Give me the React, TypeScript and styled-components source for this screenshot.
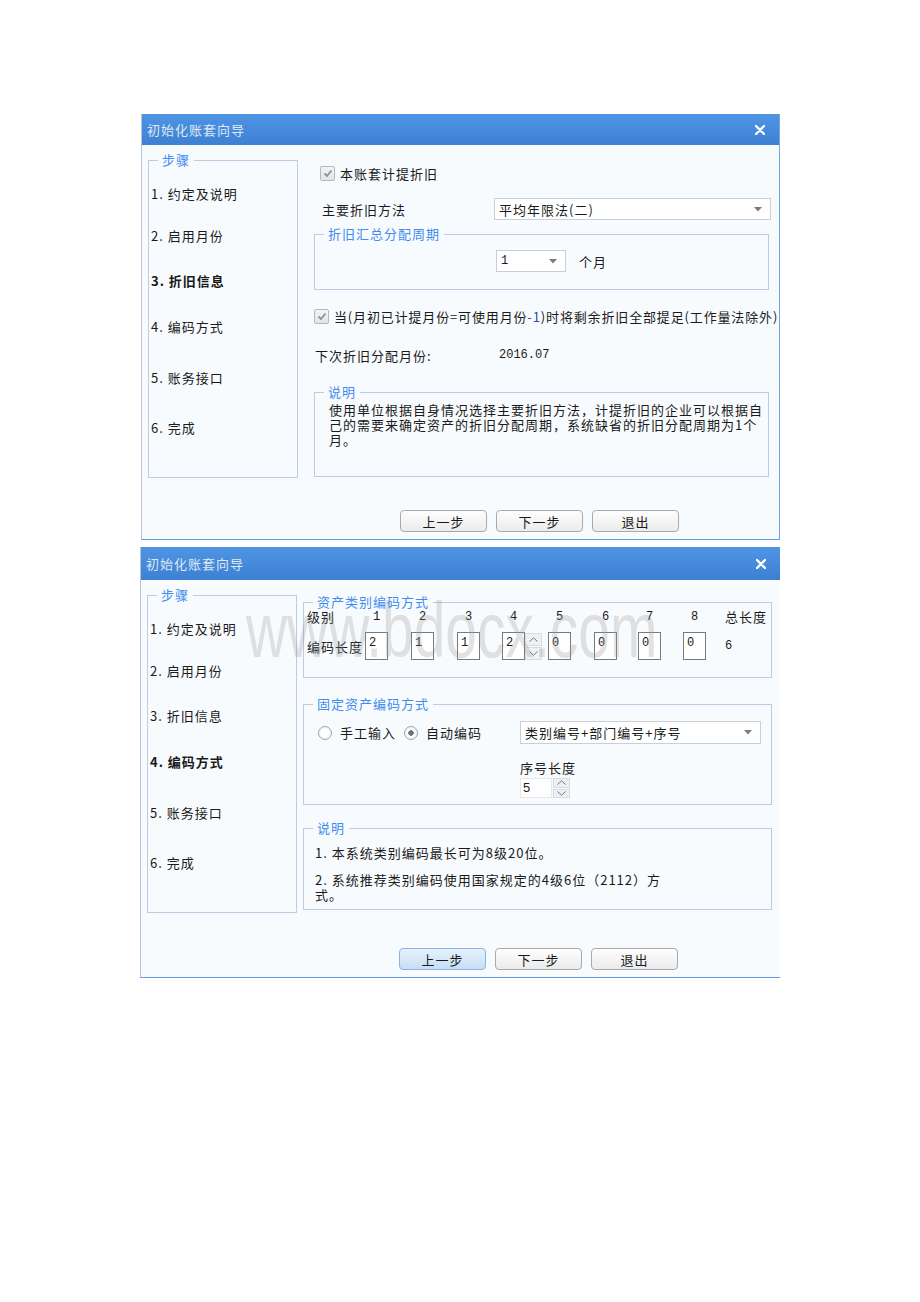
import React from "react";
import styled, { createGlobalStyle } from "styled-components";

const GlobalStyle = createGlobalStyle`
  body {
    margin: 0;
    background: #ffffff;
    font-family: "Noto Sans CJK SC", "Liberation Sans", sans-serif;
    color: #1a1a1a;
  }
`;

const Page = styled.div`
  width: 920px;
  height: 1302px;
  box-sizing: border-box;
  padding: 114px 0 0 140px;
  display: flex;
  flex-direction: column;
  gap: 7px;
`;

const Window = styled.div<{ $h: number; $shift?: number; $edge?: boolean }>`
  position: relative;
  width: ${(p) => 640 - (p.$shift || 0)}px;
  height: ${(p) => p.$h}px;
  margin-left: ${(p) => p.$shift || 0}px;
  box-sizing: border-box;
  display: flex;
  flex-direction: column;
  background: #f8fbfe;
  border-left: 1px solid #b9c3cf;
  border-right: ${(p) => (p.$edge ? "1px solid #6fa6e4" : "none")};
  border-bottom: 1px solid #5e9de2;
  font-size: 13px;
  letter-spacing: 1px;
`;

const TitleBar = styled.div<{ $h: number }>`
  height: ${(p) => p.$h}px;
  flex: none;
  display: flex;
  align-items: center;
  justify-content: space-between;
  padding: 0 14px 0 5px;
  background: linear-gradient(#4f95e4, #3d80d3);
  color: #dfe9f6;
  font-size: 13px;
`;

const CloseIcon = () => (
  <svg width="10" height="10" viewBox="0 0 10 10">
    <path d="M1 1L9 9M9 1L1 9" stroke="#ffffff" strokeWidth="2.4" strokeLinecap="round" />
  </svg>
);

const Body = styled.div<{ $gap: number; $padL: number }>`
  display: grid;
  grid-template-columns: 150px 1fr;
  column-gap: ${(p) => p.$gap}px;
  padding: 7px 0 0 ${(p) => p.$padL}px;
  align-items: start;
`;

const Group = styled.fieldset<{ $w?: number; $h: number; $mt?: number }>`
  margin: ${(p) => p.$mt || 0}px 0 0 0;
  padding: 0;
  min-width: 0;
  width: ${(p) => (p.$w ? `${p.$w}px` : "auto")};
  height: ${(p) => p.$h}px;
  box-sizing: border-box;
  border: 1px solid #bccde2;
  border-radius: 0;
`;

const Legend = styled.legend`
  margin-left: 9px;
  padding: 0 4px;
  color: #3f8bef;
  font-size: 13px;
  line-height: 16px;
`;

const StepItem = styled.div<{ $mt: number; $active?: boolean }>`
  height: 20px;
  line-height: 20px;
  margin-top: ${(p) => p.$mt}px;
  padding-left: 2px;
  font-weight: ${(p) => (p.$active ? 700 : 400)};
  color: #1a1a1a;
  white-space: nowrap;
`;

const steps = ["1. 约定及说明", "2. 启用月份", "3. 折旧信息", "4. 编码方式", "5. 账务接口", "6. 完成"];
const stepGaps = [16, 22, 25, 26, 31, 30];

const Steps = ({ active }: { active: number }) => (
  <Group $h={326}>
    <Legend>步骤</Legend>
    {steps.map((s, i) => (
      <StepItem key={s} $mt={stepGaps[i]} $active={i === active}>
        {s}
      </StepItem>
    ))}
  </Group>
);

const Content = styled.div`
  display: flex;
  flex-direction: column;
  min-width: 0;
`;

const Row = styled.div<{ $mt: number; $h?: number; $indent?: number; $tight?: boolean }>`
  display: flex;
  align-items: center;
  height: ${(p) => p.$h || 20}px;
  margin-top: ${(p) => p.$mt}px;
  padding-left: ${(p) => p.$indent || 0}px;
  white-space: nowrap;
  letter-spacing: ${(p) => (p.$tight ? "0.85px" : "1px")};
`;

const Label = styled.span<{ $w?: number; $ml?: number }>`
  flex: none;
  width: ${(p) => (p.$w ? `${p.$w}px` : "auto")};
  margin-left: ${(p) => p.$ml || 0}px;
`;

const CheckBox = styled.span`
  flex: none;
  width: 13px;
  height: 13px;
  margin-right: 5px;
  border: 1px solid #b3b9c0;
  border-radius: 2px;
  background: linear-gradient(#f2f4f6, #e1e5e9);
  display: flex;
  align-items: center;
  justify-content: center;
`;

const Check = () => (
  <CheckBox>
    <svg width="10" height="9" viewBox="0 0 10 9">
      <path d="M1.5 4.5L4 7L8.5 1.5" fill="none" stroke="#8a9199" strokeWidth="1.8" />
    </svg>
  </CheckBox>
);

const Select = styled.div<{ $w: number; $h: number; $ml?: number }>`
  flex: none;
  width: ${(p) => p.$w}px;
  height: ${(p) => p.$h}px;
  margin-left: ${(p) => p.$ml || 0}px;
  box-sizing: border-box;
  border: 1px solid #c7d0da;
  background: #ffffff;
  display: flex;
  align-items: center;
  justify-content: space-between;
  padding: 0 8px 0 4px;
  font-size: 13px;
`;

const Arrow = () => (
  <svg width="8" height="5" viewBox="0 0 8 5">
    <path d="M0 0H8L4 4.5Z" fill="#7c7c7c" />
  </svg>
);

const Mono = styled.span`
  font-family: "Liberation Mono", "DejaVu Sans Mono", monospace;
  font-size: 12px;
  letter-spacing: 0;
`;

const Hint = styled.span`
  color: #2a49a8;
`;

const Note = styled.div<{ $mt: number; $pl: number; $lh?: number }>`
  margin-top: ${(p) => p.$mt}px;
  padding-left: ${(p) => p.$pl}px;
  line-height: ${(p) => p.$lh || 15}px;
  white-space: nowrap;
`;

const Footer = styled.div`
  margin-top: auto;
  display: flex;
  gap: 9px;
  padding: 0 0 7px 258px;
`;

const Button = styled.button<{ $focus?: boolean }>`
  width: 87px;
  height: 22px;
  padding: 0;
  border: 1px solid ${(p) => (p.$focus ? "#8ab5e2" : "#a9a9a9")};
  border-radius: 4px;
  background: ${(p) =>
    p.$focus ? "linear-gradient(#e6f1fc, #c8def5)" : "linear-gradient(#fefefe, #ebebeb)"};
  font-family: inherit;
  font-size: 13px;
  letter-spacing: 1px;
  color: #1a1a1a;
`;

const Buttons = ({ focus }: { focus?: boolean }) => (
  <Footer>
    <Button $focus={focus}>上一步</Button>
    <Button>下一步</Button>
    <Button>退出</Button>
  </Footer>
);

/* coding table */

const CodeGrid = styled.div`
  display: grid;
  grid-template-columns: 58px 46px 46px 45px 46px 46px 44px 45px 42px auto;
  padding-left: 3px;
  white-space: nowrap;
`;

const HeadCell = styled.div`
  height: 14px;
  line-height: 14px;
`;

const LevelNo = styled(Mono)`
  display: block;
  width: 23px;
  text-align: center;
  line-height: 14px;
`;

const BoxCell = styled.div`
  margin-top: 8px;
  height: 28px;
  display: flex;
  align-items: center;
`;

const CodeBox = styled.div`
  width: 23px;
  height: 28px;
  box-sizing: border-box;
  border: 1px solid #7a7a7a;
  background: #ffffff;
  padding: 1px 0 0 3px;
  line-height: 13px;
`;

const Spin = styled.div<{ $h: number }>`
  width: 17px;
  height: ${(p) => p.$h}px;
  display: flex;
  flex-direction: column;
  gap: 1px;
`;

const SpinHalf = styled.div`
  flex: 1;
  background: #eef1f4;
  border: 1px solid #d6dce2;
  display: flex;
  align-items: center;
  justify-content: center;
`;

const Chevron = ({ up }: { up?: boolean }) => (
  <svg width="9" height="5" viewBox="0 0 9 5">
    <path
      d={up ? "M0.5 4.5L4.5 0.8L8.5 4.5" : "M0.5 0.5L4.5 4.2L8.5 0.5"}
      fill="none"
      stroke="#6f7780"
      strokeWidth="1"
    />
  </svg>
);

const Spinner = ({ h }: { h: number }) => (
  <Spin $h={h}>
    <SpinHalf>
      <Chevron up />
    </SpinHalf>
    <SpinHalf>
      <Chevron />
    </SpinHalf>
  </Spin>
);

const Radio = styled.span<{ $on?: boolean }>`
  flex: none;
  width: 14px;
  height: 14px;
  box-sizing: border-box;
  border-radius: 50%;
  border: 1px solid #a3a9b0;
  background: radial-gradient(circle, ${(p) => (p.$on ? "#6e7378 0 2.5px, " : "")}#ffffff 3px, #e4e7ea);
  margin-right: 8px;
`;

const RadioText = styled.span`
  margin-right: 8px;
`;

const FixedGrid = styled.div`
  display: grid;
  grid-template-columns: 202px 241px;
  padding-left: 14px;
  margin-top: 9px;
`;

const SeqBlock = styled.div`
  grid-column: 2;
  margin-top: 14px;
  display: flex;
  flex-direction: column;
`;

const SeqInputRow = styled.div`
  display: flex;
  gap: 1px;
  margin-top: 1px;
`;

const SeqInput = styled.div`
  width: 32px;
  height: 20px;
  box-sizing: border-box;
  background: #ffffff;
  border: 1px solid #e4e8ec;
  padding-left: 2px;
  line-height: 18px;
  font-family: "Liberation Sans", sans-serif;
`;

const Watermark = styled.div`
  position: absolute;
  left: 105px;
  top: 44px;
  font-family: "Liberation Sans", Arial, sans-serif;
  font-size: 78px;
  line-height: 78px;
  letter-spacing: 0;
  color: rgba(150, 150, 150, 0.28);
  transform: scaleX(0.73);
  transform-origin: left top;
  pointer-events: none;
  white-space: nowrap;
`;

const levels = [1, 2, 3, 4, 5, 6, 7, 8];
const codes = [2, 1, 1, 2, 0, 0, 0, 0];

export default function App() {
  return (
    <>
      <GlobalStyle />
      <Page>
        <Window $h={426} $shift={1} $edge>
          <TitleBar $h={31}>
            <span>初始化账套向导</span>
            <CloseIcon />
          </TitleBar>
          <Body $gap={16} $padL={6}>
            <Steps active={2} />
            <Content>
              <Row $mt={11} $indent={6}>
                <Check />
                本账套计提折旧
              </Row>
              <Row $mt={15} $h={22} $indent={8}>
                <Label $w={172}>主要折旧方法</Label>
                <Select $w={277} $h={22}>
                  平均年限法(二)
                  <Arrow />
                </Select>
              </Row>
              <Group $w={455} $h={64} $mt={6}>
                <Legend>折旧汇总分配周期</Legend>
                <Row $mt={8} $h={22}>
                  <Select $w={70} $h={22} $ml={181}>
                    <Mono>1</Mono>
                    <Arrow />
                  </Select>
                  <Label $ml={13}>个月</Label>
                </Row>
              </Group>
              <Row $mt={16} $tight>
                <Check />
                当(月初已计提月份=可使用月份<Hint>-1</Hint>)时将剩余折旧全部提足(工作量法除外)
              </Row>
              <Row $mt={19} $indent={1}>
                <Label $w={184}>下次折旧分配月份:</Label>
                <Mono>2016.07</Mono>
              </Row>
              <Group $w={455} $h={93} $mt={19}>
                <Legend>说明</Legend>
                <Note $mt={2} $pl={14}>
                  使用单位根据自身情况选择主要折旧方法，计提折旧的企业可以根据自
                  <br />
                  己的需要来确定资产的折旧分配周期，系统缺省的折旧分配周期为1个
                  <br />
                  月。
                </Note>
              </Group>
            </Content>
          </Body>
          <Buttons />
        </Window>

        <Window $h={431}>
          <TitleBar $h={33}>
            <span>初始化账套向导</span>
            <CloseIcon />
          </TitleBar>
          <Body $gap={6} $padL={6}>
            <Steps active={3} />
            <Content>
              <Group $w={469} $h={84} $mt={7}>
                <Legend>资产类别编码方式</Legend>
                <CodeGrid>
                  <HeadCell>级别</HeadCell>
                  {levels.map((l) => (
                    <HeadCell key={l}>
                      <LevelNo>{l}</LevelNo>
                    </HeadCell>
                  ))}
                  <HeadCell>总长度</HeadCell>
                  <BoxCell>编码长度</BoxCell>
                  {codes.map((c, i) => (
                    <BoxCell key={i}>
                      <CodeBox>
                        <Mono>{c}</Mono>
                      </CodeBox>
                      {i === 3 && <Spinner h={27} />}
                    </BoxCell>
                  ))}
                  <BoxCell>
                    <Mono>6</Mono>
                  </BoxCell>
                </CodeGrid>
              </Group>
              <Group $w={469} $h={109} $mt={18}>
                <Legend>固定资产编码方式</Legend>
                <FixedGrid>
                  <Row $mt={0} $h={23}>
                    <Radio />
                    <RadioText>手工输入</RadioText>
                    <Radio $on />
                    <RadioText>自动编码</RadioText>
                  </Row>
                  <Select $w={241} $h={23}>
                    类别编号+部门编号+序号
                    <Arrow />
                  </Select>
                  <SeqBlock>
                    <Label>序号长度</Label>
                    <SeqInputRow>
                      <SeqInput>5</SeqInput>
                      <Spinner h={20} />
                    </SeqInputRow>
                  </SeqBlock>
                </FixedGrid>
              </Group>
              <Group $w={469} $h={90} $mt={15}>
                <Legend>说明</Legend>
                <Note $mt={9} $pl={11}>
                  1. 本系统类别编码最长可为8级20位。
                </Note>
                <Note $mt={12} $pl={11}>
                  2. 系统推荐类别编码使用国家规定的4级6位（2112）方
                  <br />
                  式。
                </Note>
              </Group>
            </Content>
          </Body>
          <Buttons focus />
          <Watermark>www.bdocx.com</Watermark>
        </Window>
      </Page>
    </>
  );
}
